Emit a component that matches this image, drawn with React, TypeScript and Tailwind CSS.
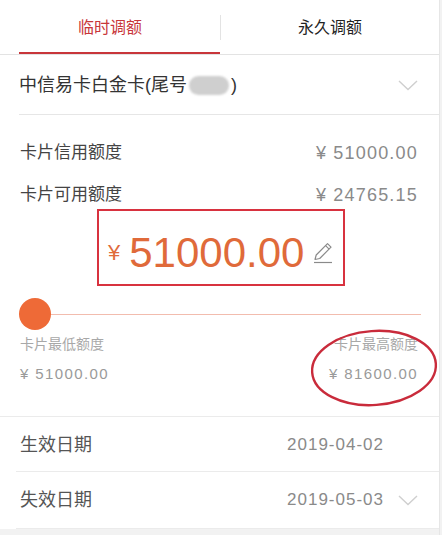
import React from "react";

const FONT = { fontFamily: '"Liberation Sans", "Noto Sans CJK SC", sans-serif' };

function Chevron() {
  return (
    <svg width="20" height="11" viewBox="0 0 20 11" className="shrink-0">
      <polyline points="1,1 10,9.5 19,1" fill="none" stroke="#cfcfcf" strokeWidth="1.4" />
    </svg>
  );
}

function PencilIcon() {
  return (
    <svg width="22" height="24" viewBox="0 0 22 24" className="shrink-0">
      <path d="M3 18.5 L4.2 14 L15.5 2.7 L19 6.2 L7.7 17.5 Z" fill="none" stroke="#8a8a8a" strokeWidth="1.2" strokeLinejoin="round" />
      <line x1="13.6" y1="4.6" x2="17.1" y2="8.1" stroke="#8a8a8a" strokeWidth="1.2" />
      <line x1="2" y1="21.5" x2="20" y2="21.5" stroke="#8a8a8a" strokeWidth="1.2" />
    </svg>
  );
}

function InfoRow({ label, value, className = "" }: { label: string; value: string; className?: string }) {
  return (
    <div className={`flex items-center justify-between pl-[20px] pr-[21px] ${className}`}>
      <span className="text-[17px] text-[#444]">{label}</span>
      <span className="text-[18px] tracking-[1.2px] text-[#8a8a8a]">{value}</span>
    </div>
  );
}

export default function App() {
  return (
    <div className="flex h-[535px] w-[442px] bg-[#f2f2f2]" style={FONT}>
      <div className="flex w-[440px] flex-col border-r border-[#e6e6e6]">
        <div className="bg-white">
          {/* tabs */}
          <div className="flex h-[55px] border-b border-[#e3e3e3]">
            <div className="flex w-[220px] flex-col">
              <div className="flex flex-1 items-center justify-center pt-[3px] text-[16px] text-[#c8363a]">临时调额</div>
              <div className="ml-[19px] h-[2px] bg-[#c8363a]" />
            </div>
            <div className="h-[25px] w-px self-center bg-[#e3e3e3]" />
            <div className="flex flex-1 items-center justify-center pt-[1px] text-[16px] text-[#222]">永久调额</div>
          </div>

          {/* card selector */}
          <div className="ml-[19px] flex h-[60px] items-center justify-between border-b border-[#e6e6e6] pr-[21px] pt-[2px]">
            <div className="flex items-center text-[18px] text-[#333]">
              <span>中信易卡白金卡(尾号</span>
              <span className="mx-[2px] h-[19px] w-[40px] rounded-full bg-[#cfcfcf] blur-[1px]" />
              <span>)</span>
            </div>
            <Chevron />
          </div>

          {/* limits */}
          <div className="relative flex flex-col border-b border-[#ebebeb] pb-[32px] pt-[19px]">
            <InfoRow label="卡片信用额度" value="¥ 51000.00" className="h-[38px]" />
            <InfoRow label="卡片可用额度" value="¥ 24765.15" className="mt-[9px] h-[28px]" />

            <div className="ml-[97px] flex h-[77px] w-[248px] items-center border-[2.5px] border-[#d8323f] pl-[9px] pt-[10px]">
              <span className="text-[22px] leading-none text-[#e06a3a]">¥</span>
              <span className="ml-[9px] text-[42px] leading-none text-[#e06a3a]">51000.00</span>
              <span className="ml-[8px]">
                <PencilIcon />
              </span>
            </div>

            <div className="mt-[12px] flex h-[32px] items-center pl-[19px] pr-[18px]">
              <div className="h-[32px] w-[32px] rounded-full bg-[#ee6a37]" />
              <div className="h-px flex-1 bg-[#f2bcae]" />
            </div>

            <div className="mt-[4px] flex justify-between pl-[20px] pr-[21px]">
              <div className="flex flex-col items-start">
                <span className="h-[20px] text-[14px] leading-[20px] text-[#a8a8a8]">卡片最低额度</span>
                <span className="mt-[10px] h-[20px] text-[15px] leading-[20px] tracking-[1.4px] text-[#9a9a9a]">¥ 51000.00</span>
              </div>
              <div className="flex flex-col items-end">
                <span className="h-[20px] text-[14px] leading-[20px] text-[#a8a8a8]">卡片最高额度</span>
                <span className="mt-[10px] h-[20px] text-[15px] leading-[20px] tracking-[1.4px] text-[#9a9a9a]">¥ 81600.00</span>
              </div>
            </div>

            {/* annotation ellipse */}
            <svg className="pointer-events-none absolute left-[308px] top-[212px]" width="132" height="82" viewBox="0 0 132 82">
              <ellipse cx="66" cy="41" rx="62" ry="37" fill="none" stroke="#c92b3b" strokeWidth="2.4" transform="rotate(-4 66 41)" />
            </svg>
          </div>

          {/* dates */}
          <div className="flex h-[54px] items-center justify-between pl-[20px] pr-[55px] pt-[2px]">
            <span className="text-[18px] text-[#555]">生效日期</span>
            <span className="text-[17px] tracking-[1px] text-[#8a8a8a]">2019-04-02</span>
          </div>
          <div className="ml-[16px] flex h-[58px] items-center justify-between border-t border-b border-[#ebebeb] pl-[4px] pr-[21px]">
            <span className="text-[18px] text-[#555]">失效日期</span>
            <div className="flex items-center gap-[14px]">
              <span className="text-[17px] tracking-[1px] text-[#8a8a8a]">2019-05-03</span>
              <Chevron />
            </div>
          </div>
        </div>
      </div>
    </div>
  );
}
